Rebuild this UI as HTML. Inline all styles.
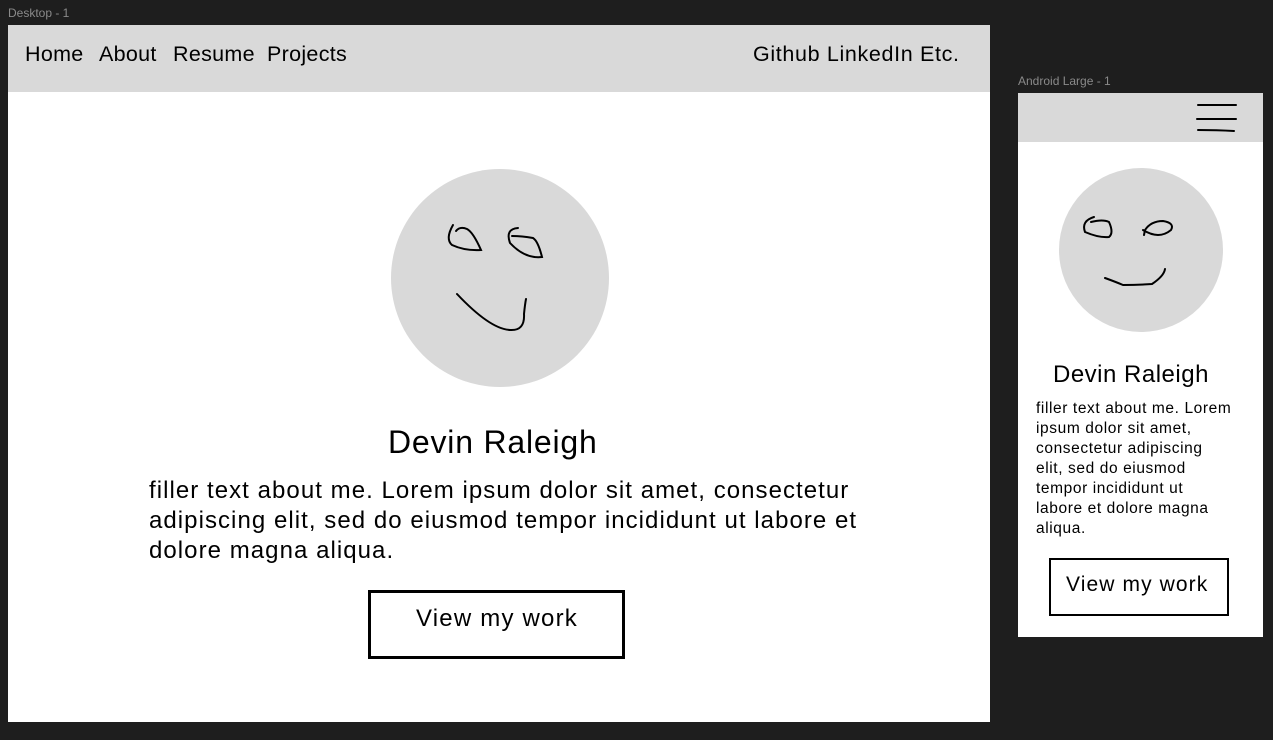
<!DOCTYPE html><html><head><style>
body{margin:0;width:1273px;height:740px;background:#1e1e1e;position:relative;overflow:hidden;font-family:"Liberation Sans",sans-serif;}
.a{position:absolute;white-space:nowrap;}
.lbl{color:#8a8a8a;font-size:12px;}
.n{font-size:21.5px;color:#000;top:42px;letter-spacing:0.3px}
</style></head><body>
<div class="a lbl" style="left:8px;top:6px">Desktop - 1</div>
<div class="a lbl" style="left:1018px;top:74px">Android Large - 1</div>
<div class="a" style="left:8px;top:25px;width:982px;height:697px;background:#fff"></div>
<div class="a" style="left:8px;top:25px;width:982px;height:67px;background:#d9d9d9"></div>
<div class="a n" style="left:25px">Home</div>
<div class="a n" style="left:99px">About</div>
<div class="a n" style="left:173px">Resume</div>
<div class="a n" style="left:267px">Projects</div>
<div class="a n" style="left:753px;letter-spacing:0.65px">Github LinkedIn Etc.</div>
<svg class="a" style="left:390px;top:169px" width="220" height="218" viewBox="0 0 220 218">
<circle cx="110" cy="109" r="109" fill="#d9d9d9"/>
<g fill="none" stroke="#000" stroke-width="2" stroke-linecap="round">
<path d="M63 56 Q55 70 62 76 Q75 82 91 81 Q83 63 77 60 Q70 57 66 62"/>
<path d="M128 59 Q115 60 120 74 Q135 90 152 88 Q148 72 143 69 Q132 67 122 67"/>
<path d="M67 125 Q100 160 120 161 Q135 162 134 145 Q135 135 136 130"/>
</g></svg>
<div class="a" style="left:388px;top:424px;font-size:32px;color:#000;letter-spacing:0.8px">Devin Raleigh</div>
<div class="a" style="left:149px;top:476px;font-size:24px;line-height:30px;color:#000;white-space:normal;width:720px;letter-spacing:1.05px">filler text about me. Lorem ipsum dolor sit amet, consectetur adipiscing elit, sed do eiusmod tempor incididunt ut labore et dolore magna aliqua.</div>
<div class="a" style="left:368px;top:590px;border:3px solid #000;width:251px;height:63px"></div>
<div class="a" style="left:416px;top:605px;font-size:24px;color:#000;letter-spacing:1.2px">View my work</div>

<div class="a" style="left:1018px;top:93px;width:245px;height:544px;background:#fff"></div>
<div class="a" style="left:1018px;top:93px;width:245px;height:49px;background:#d9d9d9"></div>
<svg class="a" style="left:1190px;top:100px" width="50" height="36"><g stroke="#000" stroke-width="2" stroke-linecap="round"><path d="M8 5 H46"/><path d="M7 19 H46"/><path d="M8 30 Q27 30 44 31"/></g></svg>
<svg class="a" style="left:1059px;top:168px" width="164" height="165" viewBox="0 0 164 165">
<circle cx="82" cy="82" r="82" fill="#d9d9d9"/>
<g fill="none" stroke="#000" stroke-width="2" stroke-linecap="round">
<path d="M35 49 Q22 53 26 64 Q40 70 50 69 Q55 65 50 54 Q44 51 32 54"/>
<path d="M84 62 Q100 72 112 62 Q116 55 104 53 Q92 53 86 62 L85 67"/>
<path d="M46 110 Q57 114 64 117 Q80 117 93 116 Q105 108 106 101"/>
</g></svg>
<div class="a" style="left:1053px;top:361px;font-size:24px;color:#000;letter-spacing:0.5px">Devin Raleigh</div>
<div class="a" style="left:1036px;top:399px;font-size:15.5px;line-height:20px;color:#000;letter-spacing:0.6px">filler text about me. Lorem<br>ipsum dolor sit amet,<br>consectetur adipiscing<br>elit, sed do eiusmod<br>tempor incididunt ut<br>labore et dolore magna<br>aliqua.</div>
<div class="a" style="left:1049px;top:558px;width:176px;height:54px;border:2px solid #000"></div>
<div class="a" style="left:1066px;top:573px;font-size:21px;color:#000;letter-spacing:1.1px">View my work</div>
</body></html>
